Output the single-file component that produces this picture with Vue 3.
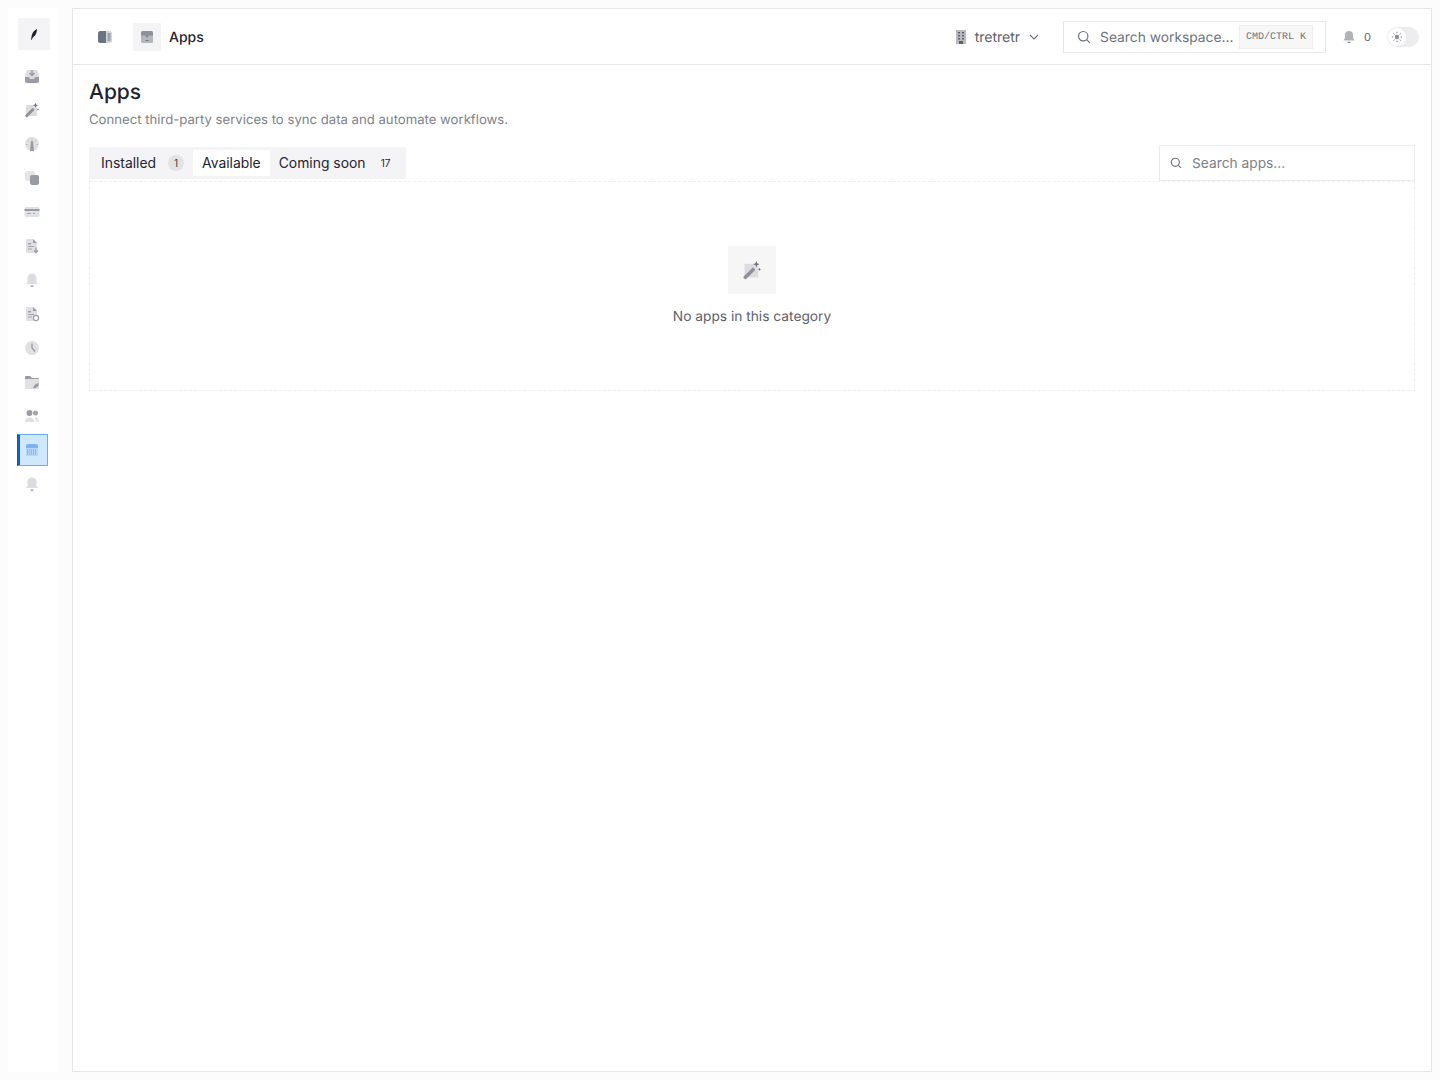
<template>
  <div class="shell">
    <aside class="sidebar">
      <div class="logo">
        <svg width="16" height="16" viewBox="0 0 16 16"><path d="M5 13.800 5.600 10c.6-3 2.400-5.800 5.400-7-.1 3.200-1 6.600-4 8.200l-1.300 2.600z" fill="#1f2430" /></svg>
      </div>
      <nav class="nav">
        <a v-for="item in navItems" :key="item.name" class="nav-item" :class="{ active: item.name === 'apps' }">
          <svg width="16" height="16" viewBox="0 0 16 16" v-html="item.icon"></svg>
        </a>
      </nav>
    </aside>

    <main class="main">
      <header class="topbar">
        <button class="panel-btn">
          <svg width="16" height="16" viewBox="0 0 16 16">
            <rect x="1" y="2" width="14" height="12" rx="2.500" fill="#d3d4d8" />
            <path d="M3.500 2H9v12H3.500A2.500 2.500 0 0 1 1 11.500v-7A2.500 2.500 0 0 1 3.500 2z" fill="#6b7280" />
            <path d="M10.500 5h3M10.500 7h3M10.500 9h3M10.500 11h3" stroke="#6b7280" stroke-width="1" />
          </svg>
        </button>
        <span class="crumb-icon">
          <svg width="14" height="14" viewBox="0 0 14 14">
            <path d="M3 1h8a2 2 0 0 1 2 2v8.500a1.500 1.500 0 0 1-1.500 1.500h-9A1.500 1.500 0 0 1 1 11.500V3a2 2 0 0 1 2-2z" fill="#b4b6bb" />
            <path d="M3 1h8a2 2 0 0 1 2 2v2.500H1V3a2 2 0 0 1 2-2z" fill="#8d9097" />
            <path d="M5.200 5.500h3.600L7 7.500z" fill="#74777f" />
            <rect x="5.500" y="10" width="3" height="1" fill="#74777f" />
          </svg>
        </span>
        <span class="crumb-label">Apps</span>

        <div class="workspace">
          <svg width="12" height="16" viewBox="0 0 12 16">
            <rect x="1" y="1" width="10" height="14" fill="#b9bbc0" />
            <path d="M3 3h2v1.500H3zM7 3h2v1.500H7zM3 6h2v1.500H3zM7 6h2v1.500H7zM3 9h2v1.500H3zM7 9h2v1.500H7z" fill="#5d616b" />
            <rect x="4" y="12" width="4" height="3" fill="#5d616b" />
          </svg>
          <span>tretretr</span>
          <svg class="chev" width="12" height="12" viewBox="0 0 12 12"><path d="M2 4l4 4 4-4" fill="none" stroke="#6b7280" stroke-width="1.200" /></svg>
        </div>

        <div class="global-search">
          <svg width="14" height="14" viewBox="0 0 14 14"><circle cx="6.200" cy="6.200" r="4.700" fill="none" stroke="#6b7280" stroke-width="1.200" /><path d="M9.700 9.700 12.800 12.800" stroke="#6b7280" stroke-width="1.200" /></svg>
          <span class="global-search-text">Search workspace...</span>
          <kbd>CMD/CTRL K</kbd>
        </div>

        <div class="notif">
          <svg width="14" height="14" viewBox="0 0 14 14">
            <path d="M7 1a4 4 0 0 1 4 4v3l1.500 2.500h-11L3 8V5a4 4 0 0 1 4-4z" fill="#b0b2b7" />
            <path d="M5.300 11.800h3.400L8 13H6z" fill="#7d8088" />
          </svg>
          <span>0</span>
        </div>

        <div class="theme-toggle">
          <span class="knob">
            <svg width="12" height="12" viewBox="0 0 12 12">
              <circle cx="6" cy="6" r="2.200" fill="#8b8e96" />
              <path d="M6 .8v1.600M6 9.600v1.600M.8 6h1.600M9.600 6h1.600M2.300 2.300l1.100 1.100M8.600 8.600l1.100 1.100M2.300 9.700l1.100-1.100M8.600 3.400l1.100-1.100" stroke="#8b8e96" stroke-width="1" />
            </svg>
          </span>
        </div>
      </header>

      <section class="content">
        <h1>Apps</h1>
        <p class="subtitle">Connect third-party services to sync data and automate workflows.</p>

        <div class="toolbar">
          <div class="tabs">
            <button v-for="tab in tabs" :key="tab.label" class="tab" :class="{ selected: tab.label === activeTab }" @click="activeTab = tab.label">
              {{ tab.label }}
              <span v-if="tab.count" class="count" :class="{ filled: tab.filled }">{{ tab.count }}</span>
            </button>
          </div>
          <div class="app-search">
            <svg width="12" height="12" viewBox="0 0 14 14"><circle cx="6.200" cy="6.200" r="4.700" fill="none" stroke="#6b7280" stroke-width="1.300" /><path d="M9.700 9.700 12.800 12.800" stroke="#6b7280" stroke-width="1.300" /></svg>
            <input v-model="query" placeholder="Search apps..." />
          </div>
        </div>

        <div class="empty">
          <span class="empty-icon">
            <svg width="20" height="20" viewBox="0 0 16 16" v-html="wand"></svg>
          </span>
          <p>No apps in this category</p>
        </div>
      </section>
    </main>
  </div>
</template>

<script setup>
import { ref } from 'vue'

const activeTab = ref('Available')
const query = ref('')

const tabs = [
  { label: 'Installed', count: '1', filled: true },
  { label: 'Available' },
  { label: 'Coming soon', count: '17' }
]

const wand = `<rect x="2" y="3" width="11" height="11" rx="1" fill="#dcdde0"/><path d="M1.500 13 8 6.500a1 1 0 0 1 1.500 0l.5.500a1 1 0 0 1 0 1.500L3.500 15a1 1 0 0 1-1.500 0l-.5-.5a1 1 0 0 1 0-1.500z" fill="#8f9198"/><path d="M11.500 .8l.7 1.800 1.800.7-1.800.7-.7 1.800-.7-1.800L9 3.300l1.800-.7zM14 6l.4 1 1 .4-1 .4-.4 1-.4-1-1-.4 1-.4z" fill="#6f727a"/>`
const bell = `<path d="M8 1.500a4.500 4.500 0 0 1 4.500 4.500v4l1.500 2H2l1.500-2V6A4.500 4.500 0 0 1 8 1.500z" fill="#dcdde0"/><path d="M6.200 13.500h3.600L9 15H7z" fill="#a3a5ab"/>`
const doc = `<path d="M3 1h6l4 4v9a1 1 0 0 1-1 1H3a1 1 0 0 1-1-1V2a1 1 0 0 1 1-1z" fill="#dfe0e2"/><path d="M9 1l4 4H9z" fill="#9a9ca3"/><path d="M4 5h3v1.500H4zM4 8h6v1H4zM4 10.500h4v1H4z" fill="#a3a5ab"/>`

const navItems = [
  { name: 'inbox', icon: `<path d="M3 2h10l2 6v5a2 2 0 0 1-2 2H3a2 2 0 0 1-2-2V8z" fill="#dcdde0"/><path d="M1 9h4l1 2h4l1-2h4v4a2 2 0 0 1-2 2H3a2 2 0 0 1-2-2z" fill="#9a9ca3"/><path d="M8 2v5M5.500 5 8 7.500 10.500 5" stroke="#9a9ca3" stroke-width="1.500" fill="none"/>` },
  { name: 'wand', icon: wand },
  { name: 'gauge', icon: `<circle cx="8" cy="8" r="7" fill="#dfe0e2"/><path d="M7 5h2l1 10H6z" fill="#9a9ca3"/><path d="M8 2.500v1M4 4.500l.7.7M12 4.500l-.7.7M2.500 8.500h1M12.500 8.500h1" stroke="#a3a5ab" stroke-width="1"/>` },
  { name: 'copy', icon: `<rect x="1" y="1" width="10" height="10" rx="3" fill="#e4e5e7"/><rect x="6" y="5" width="9" height="10" rx="2" fill="#9a9ca3"/>` },
  { name: 'card', icon: `<rect x="0.500" y="3" width="15" height="10" rx="1.500" fill="#e0e1e3"/><rect x="0.500" y="5" width="15" height="2" fill="#9a9ca3"/><path d="M3 9.500h4M9 9.500h2" stroke="#a3a5ab" stroke-width="1"/>` },
  { name: 'doc-down', icon: `${doc}<path d="M12 9.500v5M10 12.500l2 2 2-2" stroke="#9a9ca3" stroke-width="1.300" fill="none"/>` },
  { name: 'bell', icon: bell },
  { name: 'doc-sync', icon: `${doc}<circle cx="12" cy="12" r="2.600" fill="#fff" stroke="#9a9ca3" stroke-width="1.100"/>` },
  { name: 'clock', icon: `<circle cx="8" cy="8" r="7" fill="#e0e1e3"/><path d="M8 3.500V8l3 3.500" stroke="#9a9ca3" stroke-width="1.300" fill="none"/>` },
  { name: 'folder', icon: `<path d="M1 3a1 1 0 0 1 1-1h4l2 2h6a1 1 0 0 1 1 1v9a1 1 0 0 1-1 1H2a1 1 0 0 1-1-1z" fill="#e0e1e3"/><path d="M1 3a1 1 0 0 1 1-1h4l2 2h6a1 1 0 0 1 1 1H1z" fill="#9a9ca3"/><path d="M9 14.500c.5-3 2.500-5 6-5.500-.3 3-2 5-5 5.200z" fill="#9a9ca3"/>` },
  { name: 'users', icon: `<circle cx="5.500" cy="5" r="3" fill="#9a9ca3"/><path d="M1 14c0-3 2-4.500 4.500-4.500S10 11 10 14z" fill="#dfe0e2"/><circle cx="11.500" cy="5" r="2.500" fill="#a3a5ab"/><path d="M11 9c2.500 0 4 1.800 4 5h-3.500z" fill="#e6e7e8"/>` },
  { name: 'apps', icon: `<rect x="2" y="2" width="12" height="5" rx="1.500" fill="#7db3f3"/><rect x="2" y="6" width="12" height="8" rx="1" fill="#b5d6fa"/><path d="M3 8h10M3 10h10M3 12h10" stroke="#5d9ff0" stroke-width="1" stroke-dasharray="1 1"/>` },
  { name: 'bell-2', icon: bell }
]
</script>

<style>
html, body {
  background: #fcfcfc;
}
</style>

<style scoped>
.shell {
  display: flex;
  gap: 14px;
  height: 1064px;
  padding: 8px;
  font-family: Inter, "Liberation Sans", sans-serif;
  color: #1f2430;
  text-rendering: geometricPrecision;
}
.sidebar {
  width: 50px;
  flex-shrink: 0;
  background: #fff;
  display: flex;
  flex-direction: column;
  align-items: flex-start;
  padding-top: 10px;
  box-sizing: border-box;
}
.logo {
  width: 32px;
  height: 32px;
  margin-left: 10px;
  background: #f4f4f6;
  display: flex;
  align-items: center;
  justify-content: center;
}
.nav {
  margin: 10px 0 0 9px;
  display: flex;
  flex-direction: column;
  gap: 2px;
}
.nav-item {
  width: 31px;
  height: 32px;
  box-sizing: border-box;
  padding-right: 1px;
  display: flex;
  align-items: center;
  justify-content: center;
}
.nav-item.active {
  background: #d0e8fe;
  border: 1px solid #6aaaf8;
  border-left: 3px solid #0a5fd8;
  padding-right: 3px;
}
.main {
  flex: 1;
  background: #fff;
  border: 1px solid #e8e8ea;
  display: flex;
  flex-direction: column;
  min-width: 0;
}
.topbar {
  height: 55px;
  border-bottom: 1px solid #e8e8ea;
  display: flex;
  align-items: center;
  padding: 0 12px 0 24px;
  flex-shrink: 0;
}
.panel-btn {
  width: 16px;
  height: 16px;
  padding: 0;
  border: none;
  background: none;
  margin-right: 20px;
  display: flex;
}
.crumb-icon {
  width: 28px;
  height: 28px;
  background: #f4f4f6;
  display: flex;
  align-items: center;
  justify-content: center;
}
.crumb-label {
  margin-left: 8px;
  padding-top: 1px;
  font-size: 14px;
  font-weight: 500;
}
.workspace {
  margin-left: auto;
  display: flex;
  align-items: center;
  font-size: 14px;
  color: #5d616b;
}
.workspace span {
  margin-left: 8px;
  padding-top: 1px;
}
.chev {
  margin-left: 8px;
}
.global-search {
  margin-left: 23px;
  width: 263px;
  height: 32px;
  box-sizing: border-box;
  border: 1px solid #e8e8ea;
  display: flex;
  align-items: center;
  padding: 0 12px 0 13px;
}
.global-search-text {
  margin-left: 9px;
  padding-top: 2px;
  font-size: 13.800px;
  color: #6b7280;
  white-space: nowrap;
}
kbd {
  margin-left: auto;
  background: #f7f7f8;
  border: 1px solid #efeff1;
  height: 24px;
  padding: 2px 6px 0;
  box-sizing: border-box;
  display: flex;
  align-items: center;
  font-family: "Liberation Mono", monospace;
  font-size: 10px;
  color: #6b7280;
  white-space: nowrap;
}
.notif {
  margin-left: 16px;
  display: flex;
  align-items: center;
  gap: 8px;
  font-size: 11px;
  color: #5d616b;
}
.theme-toggle {
  margin-left: 16px;
  width: 32px;
  height: 20px;
  border-radius: 10px;
  background: #ededef;
  display: flex;
  align-items: center;
  padding-left: 1px;
  box-sizing: border-box;
}
.knob {
  width: 18px;
  height: 18px;
  border-radius: 50%;
  background: #fff;
  display: flex;
  align-items: center;
  justify-content: center;
}
.content {
  padding: 13px 16px 12px;
}
h1 {
  margin: 0;
  font-size: 21px;
  line-height: 30px;
  font-weight: 500;
  color: #1f2430;
}
.subtitle {
  margin: 2px 0 0;
  font-size: 13.150px;
  line-height: 20px;
  color: #7e828b;
}
.toolbar {
  margin-top: 15px;
  display: flex;
  justify-content: space-between;
  align-items: center;
}
.tabs {
  display: flex;
  background: #f4f4f6;
  padding: 3px;
  height: 32px;
  box-sizing: border-box;
}
.tab {
  border: none;
  background: none;
  font: inherit;
  font-size: 13.900px;
  color: #1f2430;
  padding: 0 9px 1px;
  display: flex;
  align-items: center;
  gap: 12px;
  white-space: nowrap;
}
.tab.selected {
  background: #fff;
}
.count {
  width: 16px;
  height: 16px;
  margin-top: 1px;
  border-radius: 50%;
  font-size: 10px;
  display: flex;
  align-items: center;
  justify-content: center;
}
.count.filled {
  background: #e2e3e5;
  color: #3a3e48;
}
.app-search {
  width: 256px;
  height: 36px;
  box-sizing: border-box;
  border: 1px solid #ececee;
  display: flex;
  align-items: center;
  padding: 0 10px;
  gap: 10px;
}
.app-search input {
  border: none;
  outline: none;
  flex: 1;
  min-width: 0;
  font: inherit;
  font-size: 13.750px;
  color: #1f2430;
  background: none;
  padding: 0 0 1px;
}
.app-search input::placeholder {
  color: #7e828b;
  opacity: 1;
}
.empty {
  height: 210px;
  box-sizing: border-box;
  border: 1px dashed #efeff1;
  display: flex;
  flex-direction: column;
  align-items: center;
  padding-top: 64px;
}
.empty-icon {
  width: 48px;
  height: 48px;
  background: #f6f6f7;
  display: flex;
  align-items: center;
  justify-content: center;
}
.empty p {
  margin: 13px 0 0;
  font-size: 13.750px;
  line-height: 20px;
  color: #5d616b;
}
</style>
